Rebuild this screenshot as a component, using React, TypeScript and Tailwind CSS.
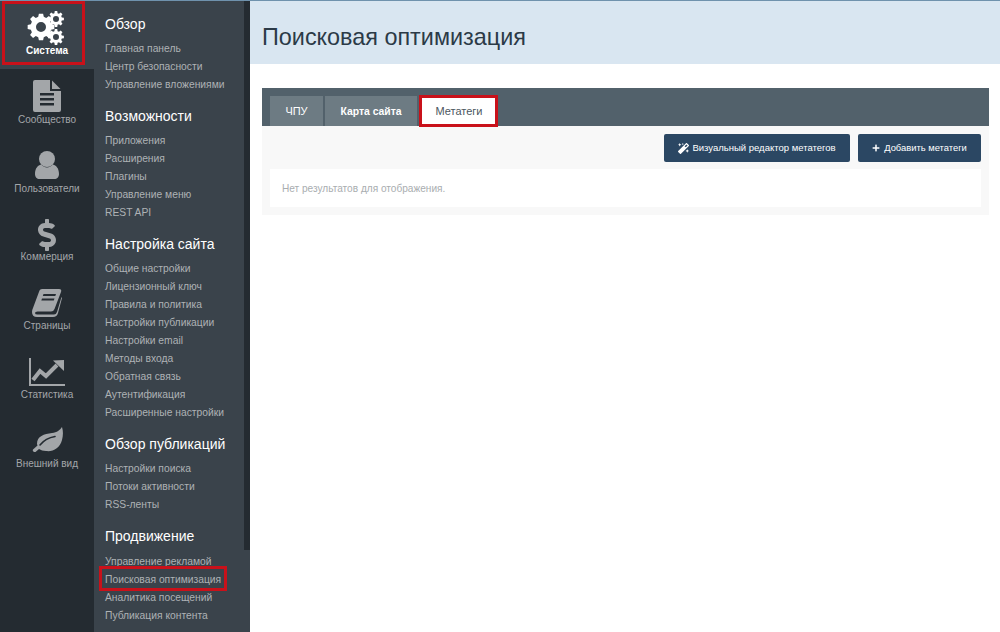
import React from 'react';
import { FaDollarSign, FaMagic, FaPlus } from 'react-icons/fa';

// builds a gear outline plus its hole, for the cogs logo
function gearPath(cx: number, cy: number, outer: number, inner: number, hole: number, teeth: number) {
  const pts: string[] = [];
  const step = (Math.PI * 2) / teeth;
  for (let i = 0; i < teeth; i++) {
    const a = i * step;
    const corners: [number, number][] = [
      [inner, a - step * 0.34],
      [outer, a - step * 0.2],
      [outer, a + step * 0.2],
      [inner, a + step * 0.34],
    ];
    corners.forEach(([r, t]) => pts.push(`${(cx + r * Math.cos(t)).toFixed(2)} ${(cy + r * Math.sin(t)).toFixed(2)}`));
  }
  const circle = `M${cx - hole} ${cy}a${hole} ${hole} 0 1 0 ${hole * 2} 0a${hole} ${hole} 0 1 0 ${-hole * 2} 0Z`;
  return `M${pts.join('L')}Z${circle}`;
}

const CogsIcon = () => (
  <svg width="40" height="34" viewBox="0 0 40 34" className="overflow-visible" fill="currentColor" fillRule="evenodd">
    <path d={gearPath(14, 17, 13.5, 10.5, 5, 8)} />
    <path d={gearPath(29, 9, 8, 6, 3, 8)} />
    <path d={gearPath(29, 27, 8, 6, 3, 8)} />
  </svg>
);

const FileIcon = () => (
  <svg width="28" height="32" viewBox="0 0 28 32" fill="currentColor" fillRule="evenodd">
    <path d="M2 0H17V11H28V30A2 2 0 0 1 26 32H2A2 2 0 0 1 0 30V2A2 2 0 0 1 2 0ZM7 13V15.5H21V13ZM7 18V20.5H21V18ZM7 23V25.5H21V23Z" />
    <path d="M19 0.5L27.5 9H19Z" />
  </svg>
);

const UserIcon = () => (
  <svg width="24" height="28" viewBox="0 0 24 28" fill="currentColor">
    <circle cx="12" cy="8" r="8" />
    <path d="M0 23C0 17 3 14.5 6 13.5C8 15.5 10 16.5 12 16.5C14 16.5 16 15.5 18 13.5C21 14.5 24 17 24 23C24 26 22 28 19.5 28H4.5C2 28 0 26 0 23Z" />
  </svg>
);

const BookIcon = () => (
  <svg width="30" height="28" viewBox="0 0 30 28" fill="currentColor" fillRule="evenodd">
    <path d="M7.5 1.5Q8 0 10 0H27Q30 0 29 3L22.5 20Q21.5 22.5 19 22.5H5.5Q3 22.5 3 24Q3 25.5 5.5 25.5H22Q24 25.5 25 23L29.5 8L30 9L26 24Q25 28 21 28H5Q0 28 0 23Q0 21 1 19ZM11.5 5L10.8 7H23.3L24 5ZM10 9.5L9.3 11.5H21.8L22.5 9.5Z" />
  </svg>
);

const ChartIcon = () => (
  <svg width="36" height="28" viewBox="0 0 36 28" fill="none" stroke="currentColor">
    <path d="M1 0V27H36" strokeWidth="2" />
    <path d="M4 22L11 13L17 18L28 7" strokeWidth="4" />
    <path d="M24 2.5L35 2V13Z" fill="currentColor" stroke="none" />
  </svg>
);

const LeafIcon = () => (
  <svg width="31" height="25" viewBox="0 0 31 25" fill="currentColor">
    <path d="M5 17C5 9 12 7 20 6C25 5.5 28 3 30 0C31.5 5 31 9 30 13C28 21 21 25 14 24C11 24 9 23 7 22L3.5 25C2 25.5 0 24 1 22.5L5.5 18.5Z" />
    <path d="M8 18C12 13 17 10.5 23 9.5" fill="none" stroke="#242b31" strokeWidth="1.6" strokeLinecap="round" />
  </svg>
);

const navItems = [
  { label: 'Сообщество', icon: <FileIcon />, tight: false },
  { label: 'Пользователи', icon: <UserIcon />, tight: false },
  { label: 'Коммерция', icon: <div className="mt-[2px]"><FaDollarSign className="text-[32px]" /></div>, tight: true },
  { label: 'Страницы', icon: <BookIcon />, tight: true },
  { label: 'Статистика', icon: <ChartIcon />, tight: true },
  { label: 'Внешний вид', icon: <div className="mb-[3px]"><LeafIcon /></div>, tight: true },
];

const menu = [
  { title: 'Обзор', items: ['Главная панель', 'Центр безопасности', 'Управление вложениями'] },
  { title: 'Возможности', items: ['Приложения', 'Расширения', 'Плагины', 'Управление меню', 'REST API'] },
  {
    title: 'Настройка сайта',
    items: [
      'Общие настройки',
      'Лицензионный ключ',
      'Правила и политика',
      'Настройки публикации',
      'Настройки email',
      'Методы входа',
      'Обратная связь',
      'Аутентификация',
      'Расширенные настройки',
    ],
  },
  { title: 'Обзор публикаций', items: ['Настройки поиска', 'Потоки активности', 'RSS-ленты'] },
  {
    title: 'Продвижение',
    items: ['Управление рекламой', 'Поисковая оптимизация', 'Аналитика посещений', 'Публикация контента'],
  },
];

export default function App() {
  return (
    <div className="flex h-[632px] w-[1000px] flex-col overflow-hidden bg-white font-['Liberation_Sans',Arial,sans-serif]">
      <div className="h-px shrink-0 bg-[#6f92ad]" />
      <div className="flex min-h-0 flex-1">
        <aside className="flex w-[94px] shrink-0 flex-col bg-[#242b31]">
          <div className="relative h-[68px] bg-[#3a434b] text-white">
            <div className="flex h-[43px] justify-center pt-[9px]">
              <CogsIcon />
            </div>
            <div className="text-center text-[10px] font-bold leading-[13px]">Система</div>
            <div className="absolute left-[2px] top-0 h-[64px] w-[83px] border-[3px] border-[#c9111a]" />
          </div>
          {navItems.map((item) => (
            <div key={item.label} className="h-[69px] text-[#a3a6a9]">
              <div className="flex h-[44px] items-center justify-center pt-[10px]">{item.icon}</div>
              <div className={`text-center text-[10px] leading-[13px] ${item.tight ? '-mt-px' : ''}`}>{item.label}</div>
            </div>
          ))}
        </aside>

        <nav className="w-[150px] shrink-0 bg-[#3a434b] pl-[11px] pt-[14px]">
          {menu.map((group) => (
            <div key={group.title} className="mb-[13px]">
              <h3 className={`text-[14px] leading-[18px] text-white ${group.title === 'Продвижение' ? 'mb-[8px]' : 'mb-[7px]'}`}>
                {group.title}
              </h3>
              <ul>
                {group.items.map((item) => (
                  <li key={item} className="relative h-[18px] whitespace-nowrap text-[10.3px] leading-[18px] text-[#aeb2b5]">
                    {item}
                    {item === 'Поисковая оптимизация' && (
                      <div className="absolute left-[-6px] top-[-5px] h-[25px] w-[128px] border-[3px] border-[#c9111a]" />
                    )}
                  </li>
                ))}
              </ul>
            </div>
          ))}
        </nav>
        <div className="w-[6px] shrink-0 bg-[#3a434b]">
          <div className="h-[549px] bg-[#242b31]" />
        </div>

        <main className="flex-1">
          <header className="h-[63px] bg-[#d9e6f1] pl-[12px] pt-[21px]">
            <h1 className="text-[23.4px] leading-[30px] text-[#2b3a47]">Поисковая оптимизация</h1>
          </header>

          <section className="ml-[12px] mr-[11px] mt-[24px] bg-[#f8f8f8]">
            <div className="flex h-[38px] items-end gap-[2px] bg-[#52616b] pl-[8px]">
              <div className="flex h-[30px] w-[53px] items-center justify-center bg-[#6d7b83] text-[11px] text-white">ЧПУ</div>
              <div className="flex h-[30px] w-[92px] items-center justify-center bg-[#6d7b83] pt-px text-[10.4px] font-bold text-white">
                Карта сайта
              </div>
              <div className="relative ml-[2px] flex h-[30px] w-[76px] items-center justify-center bg-white text-[11px] text-[#4b5660]">
                Метатеги
                <div className="absolute -bottom-px -left-[2px] -right-px -top-px border-[3px] border-[#c9111a]" />
              </div>
            </div>
            <div className="flex justify-end gap-[8px] pr-[8px] pt-[8px]">
              <button className="flex h-[28px] w-[186px] items-center justify-center gap-[3px] rounded-[2px] bg-[#2b4763] text-[9.5px] text-white">
                <FaMagic className="text-[11px]" />
                Визуальный редактор метатегов
              </button>
              <button className="flex h-[28px] w-[123px] items-center justify-center gap-[4px] rounded-[2px] bg-[#2b4763] text-[9.4px] text-white">
                <FaPlus className="text-[8px]" />
                Добавить метатеги
              </button>
            </div>
            <div className="mx-[8px] mt-[7px] flex h-[38px] items-center bg-white pl-[12px] pt-px text-[10.1px] text-[#a9adb0]">
              Нет результатов для отображения.
            </div>
            <div className="h-[8px]" />
          </section>
        </main>
      </div>
    </div>
  );
}
